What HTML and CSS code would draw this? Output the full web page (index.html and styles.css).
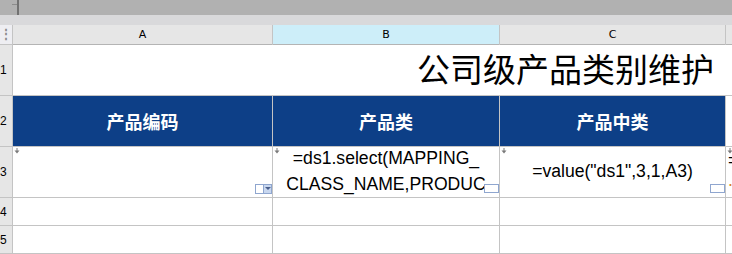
FILE: index.html
```html
<!DOCTYPE html>
<html lang="zh-CN">
<head>
    <meta charset="UTF-8">
    <title>公司级产品类别维护</title>
    <link rel="stylesheet" href="styles.css">
</head>
<body>
    <!-- 顶部工具栏 -->
    <div class="topbar">
        <div class="topbar-left"><span class="dash"></span></div>
    </div>
    <div class="ribbon"></div>

    <div class="sheet">
        <!-- 列头 -->
        <div class="corner">⋮</div>
        <div class="col-head">A</div>
        <div class="col-head active">B</div>
        <div class="col-head">C</div>
        <div class="col-head"></div>

        <!-- 第1行：标题 -->
        <div class="row-head"><span>1</span></div>
        <div class="cell title">公司级产品类别维护</div>

        <!-- 第2行：表头 -->
        <div class="row-head"><span>2</span></div>
        <div class="cell head">产品编码</div>
        <div class="cell head">产品类</div>
        <div class="cell head">产品中类</div>
        <div class="cell"></div>

        <!-- 第3行：公式 -->
        <div class="row-head"><span>3</span></div>
        <div class="cell formula">
            <svg class="pin" width="6" height="6" viewBox="0 0 6 6"><path d="M3 0V3" stroke="#7a7a7a"/><path d="M0.5 2.5H5.5L3 5.5Z" fill="#7a7a7a"/></svg>
            <span class="dropdown"><i></i><b></b></span>
        </div>
        <div class="cell formula">
            <svg class="pin" width="6" height="6" viewBox="0 0 6 6"><path d="M3 0V3" stroke="#7a7a7a"/><path d="M0.5 2.5H5.5L3 5.5Z" fill="#7a7a7a"/></svg>
            <div class="text">=ds1.select(MAPPING_<br>CLASS_NAME,PRODUC</div>
            <span class="marker"></span>
        </div>
        <div class="cell formula">
            <svg class="pin" width="6" height="6" viewBox="0 0 6 6"><path d="M3 0V3" stroke="#7a7a7a"/><path d="M0.5 2.5H5.5L3 5.5Z" fill="#7a7a7a"/></svg>
            <div class="text">=value("ds1",3,1,A3)</div>
            <span class="marker"></span>
        </div>
        <div class="cell formula overflow">
            <svg class="pin" width="6" height="6" viewBox="0 0 6 6"><path d="M3 0V3" stroke="#7a7a7a"/><path d="M0.5 2.5H5.5L3 5.5Z" fill="#7a7a7a"/></svg>
            <div class="text-left">=<br><span class="orange">.</span></div>
        </div>

        <!-- 第4、5行：空行 -->
        <div class="row-head"><span>4</span></div>
        <div class="cell"></div>
        <div class="cell"></div>
        <div class="cell"></div>
        <div class="cell"></div>

        <div class="row-head"><span>5</span></div>
        <div class="cell"></div>
        <div class="cell"></div>
        <div class="cell"></div>
        <div class="cell"></div>
    </div>
</body>
</html>
```

FILE: styles.css
```css
body {
    margin: 0;
    overflow: hidden;
    background-color: #fff;
    font-family: "Liberation Sans", Arial, sans-serif;
}
.topbar {
    height: 15px;
    background-color: #b1b1b1;
    display: flex;
}
.topbar-left {
    width: 17px;
    border-right: 2px solid #727272;
    position: relative;
}
.dash {
    position: absolute;
    top: 4px;
    left: 12px;
    width: 5px;
    height: 1px;
    background-color: #8c8c8c;
}
.ribbon {
    height: 10px;
    background-color: #d9d9db;
}
.sheet {
    display: grid;
    grid-template-columns: 12px 259px 226px 225px 1fr;
    grid-template-rows: 19px 50px 50px 50px 27px 27px 10px;
    gap: 1px;
    background-color: #c4c4c4;
}
.corner {
    background-color: #eeeef2;
    color: #8a8a8a;
    font-size: 12px;
    font-weight: bold;
    line-height: 19px;
    overflow: hidden;
}
.col-head {
    background-color: #e6e6e6;
    color: #000;
    font-family: "DejaVu Sans", sans-serif;
    font-size: 11px;
    display: flex;
    align-items: center;
    justify-content: center;
    border-bottom: 1px solid #b4b4b4;
    margin-bottom: -1px;
}
.col-head.active {
    background-color: #cdeef9;
}
.row-head {
    background-color: #e6e6e6;
    font-size: 12px;
    color: #000;
    display: flex;
    align-items: center;
    overflow: hidden;
}
.cell {
    background-color: #fff;
    position: relative;
    overflow: hidden;
}
.title {
    grid-column: 2 / 6;
    display: flex;
    align-items: center;
    justify-content: flex-end;
    padding-right: 18px;
    padding-bottom: 4px;
    font-family: "Noto Sans CJK SC", sans-serif;
    font-size: 33px;
    color: #000;
}
.head {
    background-color: #0d3f87;
    color: #fff;
    font-family: "Noto Sans CJK SC", sans-serif;
    font-size: 18px;
    font-weight: bold;
    display: flex;
    align-items: center;
    justify-content: center;
}
.formula {
    display: flex;
    align-items: center;
    justify-content: center;
}
.text {
    font-size: 17.6px;
    line-height: 26px;
    text-align: center;
    color: #000;
    white-space: nowrap;
    margin-top: -2px;
}
.overflow {
    justify-content: flex-start;
}
.text-left {
    font-size: 17.6px;
    line-height: 20px;
    margin-left: 2px;
    margin-top: -4px;
}
.orange {
    color: #d9822b;
}
.pin {
    position: absolute;
    top: 1px;
    left: 1px;
}
.marker {
    position: absolute;
    right: 0;
    bottom: 4px;
    width: 13px;
    height: 7px;
    border: 1px solid #8fa6cf;
    background-color: #fff;
}
.dropdown {
    position: absolute;
    right: 0;
    bottom: 3px;
    display: flex;
    border: 1px solid #8fa6cf;
    height: 8px;
}
.dropdown i {
    width: 7px;
    background-color: #fff;
    border-right: 1px solid #8fa6cf;
}
.dropdown b {
    width: 7px;
    background-color: #c8d7ef;
    position: relative;
}
.dropdown b::after {
    content: "";
    position: absolute;
    left: 1px;
    top: 2px;
    border-left: 3px solid transparent;
    border-right: 3px solid transparent;
    border-top: 3px solid #4a5f8c;
}
```
